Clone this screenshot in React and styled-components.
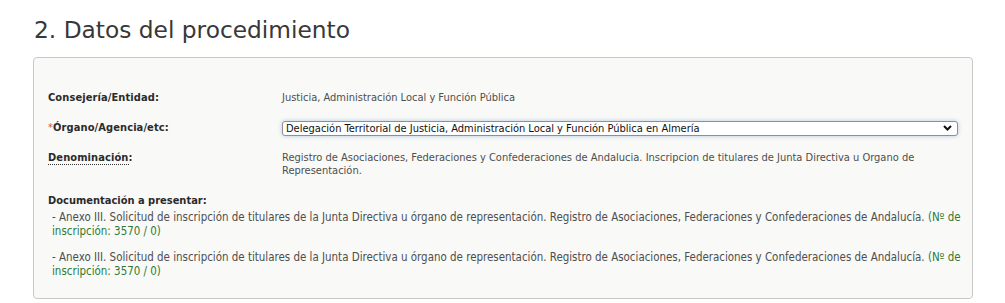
import React from "react";
import styled, { createGlobalStyle } from "styled-components";

const Global = createGlobalStyle`
  html, body { margin: 0; padding: 0; background: #ffffff; }
  body { font-family: "DejaVu Sans Condensed", "DejaVu Sans", sans-serif; }
`;

const Page = styled.div`
  padding: 16px 32px 0 33px;
  width: 940px;
`;

const Title = styled.h2`
  margin: 0 0 13px 1px;
  font-family: "DejaVu Sans", Verdana, sans-serif;
  font-weight: normal;
  font-size: 23.3px;
  line-height: 28px;
  color: #383838;
`;

const Panel = styled.div`
  box-sizing: border-box;
  width: 940px;
  height: 242px;
  border: 1px solid #c8c8c8;
  border-radius: 4px;
  background: #f9f9f7;
  padding: 33px 4px 0 14px;
  font-family: "DejaVu Sans Condensed", "DejaVu Sans", sans-serif;
  font-size: 11px;
  line-height: 13.5px;
  color: #4a4a4a;
`;

const Row = styled.div`
  display: grid;
  grid-template-columns: 234px 676px;
  align-items: ${(p) => (p.$center ? "center" : "start")};
  margin-bottom: ${(p) => p.$gap || 0}px;
`;

const Label = styled.div`
  font-weight: bold;
  color: #2b2b2b;
  letter-spacing: 0.1px;
`;

const Required = styled.span`
  color: #c0603a;
  font-weight: normal;
`;

const Abbr = styled.abbr`
  text-decoration: none;
  border-bottom: 1px dotted #333;
`;

const Value = styled.div`
  color: #4e4e4e;
`;

const SelectWrap = styled.div`
  position: relative;
  height: 15px;
`;

const Select = styled.select`
  appearance: none;
  -webkit-appearance: none;
  box-sizing: border-box;
  width: 676px;
  height: 15px;
  margin: 0;
  padding: 0 0 0 3px;
  border: 1px solid #8f8f8f;
  border-radius: 3px;
  background: #ffffff;
  box-shadow: 0 0 4px rgba(120, 160, 210, 0.55);
  font-family: "DejaVu Sans Condensed", "DejaVu Sans", sans-serif;
  font-size: 11px;
  line-height: 13px;
  color: #111;
  outline: none;
`;

const Chevron = styled.svg`
  position: absolute;
  right: 6px;
  top: 4px;
  pointer-events: none;
`;

const DocHeader = styled.div`
  font-weight: bold;
  color: #2b2b2b;
  line-height: 14px;
  margin-bottom: 2px;
`;

const DocItem = styled.div`
  padding-left: 4px;
  margin-bottom: ${(p) => p.$gap || 0}px;
  font-size: 11.45px;
  line-height: 14px;
  color: #4e4e4e;
`;

const Green = styled.span`
  color: #2e7a36;
`;

const docs = [
  "Anexo III. Solicitud de inscripción de titulares de la Junta Directiva u órgano de representación. Registro de Asociaciones, Federaciones y Confederaciones de Andalucía.",
  "Anexo III. Solicitud de inscripción de titulares de la Junta Directiva u órgano de representación. Registro de Asociaciones, Federaciones y Confederaciones de Andalucía.",
];

export default function App() {
  return (
    <>
      <Global />
      <Page>
        <Title>2. Datos del procedimiento</Title>
        <Panel>
          <Row $gap={16}>
            <Label>Consejería/Entidad:</Label>
            <Value>Justicia, Administración Local y Función Pública</Value>
          </Row>
          <Row $gap={15} $center>
            <Label>
              <Required>*</Required>Órgano/Agencia/etc:
            </Label>
            <SelectWrap>
              <Select defaultValue="a">
                <option value="a">
                  Delegación Territorial de Justicia, Administración Local y Función Pública en Almería
                </option>
              </Select>
              <Chevron width="9" height="6" viewBox="0 0 9 6">
                <path d="M1 1 L4.5 4.5 L8 1" fill="none" stroke="#111" strokeWidth="2" />
              </Chevron>
            </SelectWrap>
          </Row>
          <Row $gap={16}>
            <Label>
              <Abbr title="Denominación">Denominación</Abbr>:
            </Label>
            <Value>
              Registro de Asociaciones, Federaciones y Confederaciones de Andalucia. Inscripcion de
              titulares de Junta Directiva u Organo de Representación.
            </Value>
          </Row>
          <DocHeader>Documentación a presentar:</DocHeader>
          {docs.map((d, i) => (
            <DocItem key={i} $gap={i === 0 ? 12 : 0}>
              - {d} <Green>(Nº de</Green> <Green>inscripción: 3570 / 0)</Green>
            </DocItem>
          ))}
        </Panel>
      </Page>
    </>
  );
}
